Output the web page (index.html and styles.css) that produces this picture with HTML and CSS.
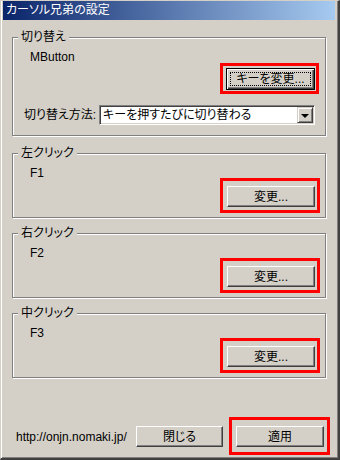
FILE: index.html
```html
<!DOCTYPE html>
<html lang="ja">
<head>
    <meta charset="UTF-8">
    <meta name="viewport" content="width=device-width, initial-scale=1.0">
    <title>カーソル兄弟の設定</title>
    <link rel="stylesheet" href="styles.css">
</head>
<body>
    <div class="window">
        <div class="titlebar">カーソル兄弟の設定</div>
        <div class="client">
            <fieldset class="group">
                <legend>切り替え</legend>
                <div class="group-body">
                    <div class="value">MButton</div>
                    <div class="button-row button-row-first">
                        <span class="mark mark-tight">
                            <button class="btn btn-default"><span class="focus">キーを変更...</span></button>
                        </span>
                    </div>
                    <div class="method-row">
                        <label class="method-label">切り替え方法:</label>
                        <div class="combo">
                            <span class="combo-text">キーを押すたびに切り替わる</span>
                            <span class="combo-btn"><span class="arrow"></span></span>
                        </div>
                    </div>
                </div>
            </fieldset>

            <fieldset class="group group-first-click">
                <legend>左クリック</legend>
                <div class="group-body">
                    <div class="value">F1</div>
                    <div class="button-row">
                        <span class="mark"><button class="btn">変更...</button></span>
                    </div>
                </div>
            </fieldset>

            <fieldset class="group">
                <legend>右クリック</legend>
                <div class="group-body">
                    <div class="value">F2</div>
                    <div class="button-row">
                        <span class="mark"><button class="btn">変更...</button></span>
                    </div>
                </div>
            </fieldset>

            <fieldset class="group">
                <legend>中クリック</legend>
                <div class="group-body">
                    <div class="value">F3</div>
                    <div class="button-row">
                        <span class="mark"><button class="btn">変更...</button></span>
                    </div>
                </div>
            </fieldset>

            <div class="footer">
                <span class="url">http://onjn.nomaki.jp/</span>
                <button class="btn btn-close">閉じる</button>
                <span class="mark mark-apply"><button class="btn">適用</button></span>
            </div>
        </div>
    </div>
</body>
</html>
```

FILE: styles.css
```css
body {
    margin: 0;
    font-family: "Liberation Sans", "Noto Sans CJK JP", sans-serif;
    font-size: 12px;
    line-height: 14px;
    font-feature-settings: "palt";
    color: #000;
    background-color: #d4d0c8;
}
.window {
    box-sizing: border-box;
    width: 340px;
    height: 460px;
    display: flex;
    flex-direction: column;
    background-color: #d4d0c8;
    border-style: solid;
    border-width: 1px 2px 2px 1px;
    border-color: #d4d0c8 #404040 #404040 #d4d0c8;
    box-shadow: inset 1px 0 #fff, inset -1px -1px #808080;
    padding: 0 3px 1px 2px;
}
.titlebar {
    height: 19px;
    line-height: 19px;
    padding-left: 3px;
    color: #fff;
    background: linear-gradient(to right, #0a246a, #a6caf0);
}
.client {
    flex: 1;
    display: flex;
    flex-direction: column;
    padding: 10px 9px 10px 9px;
}
.group {
    margin: 0;
    padding: 0;
    min-width: 0;
    border: 1px solid #808080;
    box-shadow: 1px 1px 0 #fff, inset 1px 1px 0 #fff;
}
.group + .group {
    margin-top: 8px;
}
.group-first-click {
    margin-top: 10px !important;
}
.group legend {
    margin-left: 5px;
    padding: 0 3px;
    background-color: #d4d0c8;
    position: relative;
}
.group-body {
    padding: 6px 10px 10px 12px;
}
.value {
    margin-left: 5px;
}
.button-row {
    display: flex;
    justify-content: flex-end;
    margin-top: 6px;
}
.button-row-first {
    margin-top: 4px;
}
.method-row {
    display: flex;
    align-items: center;
    margin-top: 15px;
    margin-left: -1px;
}
.method-label {
    width: 75px;
}
.combo {
    box-sizing: border-box;
    width: 216px;
    height: 20px;
    display: flex;
    background-color: #fff;
    border: 1px solid;
    border-color: #808080 #fff #fff #808080;
    box-shadow: inset 1px 1px #404040, inset -1px -1px #d4d0c8;
    padding: 1px;
}
.combo-text {
    flex: 1;
    padding-left: 2px;
    line-height: 16px;
}
.combo-btn {
    box-sizing: border-box;
    width: 16px;
    height: 16px;
    display: flex;
    align-items: center;
    justify-content: center;
    background-color: #d4d0c8;
    border: 1px solid;
    border-color: #d4d0c8 #404040 #404040 #d4d0c8;
    box-shadow: inset 1px 1px #fff, inset -1px -1px #808080;
}
.arrow {
    width: 0;
    height: 0;
    border-left: 4px solid transparent;
    border-right: 4px solid transparent;
    border-top: 4px solid #000;
    margin-top: 1px;
}
.btn {
    box-sizing: border-box;
    width: 88px;
    height: 21px;
    padding: 0;
    display: flex;
    align-items: center;
    justify-content: center;
    font: inherit;
    color: #000;
    background-color: #d4d0c8;
    border: 1px solid;
    border-color: #fff #404040 #404040 #fff;
    box-shadow: inset -1px -1px #808080;
    position: relative;
}
.btn-default {
    width: 89px;
    height: 22px;
    border: 1px solid #000;
    box-shadow: inset 1px 1px #fff, inset -1px -1px #404040, inset -2px -2px #808080;
}
.focus {
    position: absolute;
    top: 3px;
    right: 3px;
    bottom: 3px;
    left: 3px;
    display: flex;
    align-items: center;
    justify-content: center;
    border: 1px dotted #000;
}
.mark {
    position: relative;
    display: flex;
}
.mark::after {
    content: "";
    position: absolute;
    top: -8px;
    right: -5px;
    bottom: -6px;
    left: -7px;
    border: 3px solid #f00;
    pointer-events: none;
}
.mark-tight::after {
    top: -5px;
    right: -4px;
    bottom: -4px;
    left: -6px;
}
.mark-apply::after {
    top: -9px;
    right: -6px;
    bottom: -8px;
    left: -7px;
}
.footer {
    margin-top: auto;
    display: flex;
    align-items: center;
    padding: 0 2px;
}
.url {
    flex: 1;
    padding-left: 2px;
}
.btn-close {
    width: 87px;
    margin-right: 13px;
}
```
